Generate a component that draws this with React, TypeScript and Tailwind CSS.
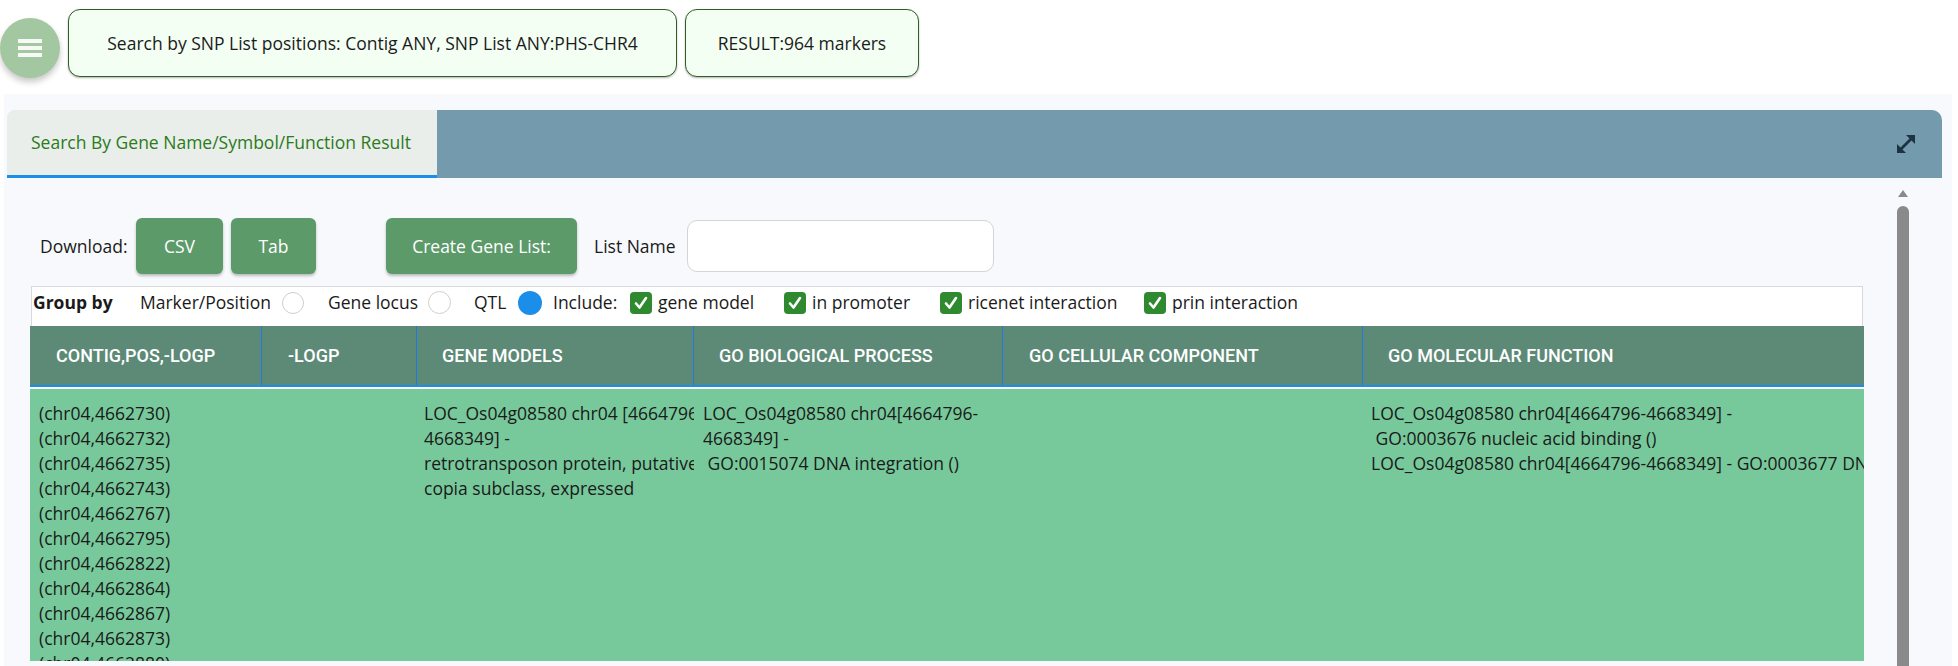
import React from "react";

const F = { fontFamily: '"Open Sans", "Noto Sans", sans-serif' };

function Check() {
  return (
    <span className="inline-flex shrink-0 w-[22px] h-[22px] rounded-[4px] bg-[#2f8a2f] items-center justify-center mr-[6px]">
      <svg width="16" height="16" viewBox="0 0 16 16">
        <path d="M3 8.5 L6.5 12.5 L13 3" stroke="white" strokeWidth="2.6" fill="none" strokeLinecap="round" strokeLinejoin="round" />
      </svg>
    </span>
  );
}

const cols = [
  { w: 232, t: "CONTIG,POS,-LOGP", pl: 26 },
  { w: 155, t: "-LOGP", pl: 26 },
  { w: 277, t: "GENE MODELS", pl: 25 },
  { w: 309, t: "GO BIOLOGICAL PROCESS", pl: 25 },
  { w: 360, t: "GO CELLULAR COMPONENT", pl: 26 },
  { w: 501, t: "GO MOLECULAR FUNCTION", pl: 25 },
];

const positions = [
  "4662730", "4662732", "4662735", "4662743", "4662767", "4662795",
  "4662822", "4662864", "4662867", "4662873", "4662880",
];

export default function App() {
  return (
    <div className="w-[1958px] h-[666px] bg-white overflow-hidden text-[#1a1a1a]" style={F}>
      {/* top bar */}
      <div className="flex items-start pt-[9px] gap-[8px]">
        <div className="w-[60px] h-[60px] mt-[9px] rounded-full bg-[#a3c7a1] shadow-[0_4px_6px_rgba(0,0,0,0.22)] flex items-center justify-center">
          <svg width="24" height="18" viewBox="0 0 24 18">
            <rect x="0" y="0" width="24" height="4" fill="white" fillOpacity="0.9" />
            <rect x="0" y="7" width="24" height="4" fill="white" fillOpacity="0.9" />
            <rect x="0" y="14" width="24" height="4" fill="white" fillOpacity="0.9" />
          </svg>
        </div>
        <div className="w-[609px] h-[68px] rounded-[12px] border border-[#2f5f24] bg-[#f4fff4] shadow-[0_1px_2px_rgba(0,0,0,0.3)] flex items-center justify-center text-[17.5px] text-[#1b1b1b]">
          Search by SNP List positions: Contig ANY, SNP List ANY:PHS-CHR4
        </div>
        <div className="w-[234px] h-[68px] rounded-[12px] border border-[#2f5f24] bg-[#f4fff4] shadow-[0_1px_2px_rgba(0,0,0,0.3)] flex items-center justify-center text-[17.5px] text-[#1b1b1b]">
          RESULT:964 markers
        </div>
      </div>

      {/* panel */}
      <div className="mt-[16px] ml-[4px] w-[1948px] h-[600px] bg-[#f7f9fc] pt-[16px] pl-[3px]">
        <div className="w-[1935px] h-[68px] rounded-t-[10px] bg-[#739bad] flex items-center justify-between">
          <div className="w-[430px] h-[68px] shrink-0 bg-[#e9eeea] rounded-tl-[8px] border-b-[3px] border-[#1a8ee8] flex items-center pl-[24px] text-[17.5px] text-[#2c7a1c]">
            Search By Gene Name/Symbol/Function Result
          </div>
          <svg className="block shrink-0 mr-[25px]" width="22" height="22" viewBox="0 0 22 22">
            <path d="M4.5 17.5 L17.5 4.5" stroke="#1e3342" strokeWidth="2.8" />
            <path d="M11 2 H20 V11 Z" fill="#1e3342" />
            <path d="M2 11 V20 H11 Z" fill="#1e3342" />
          </svg>
        </div>

        <div className="flex">
          <div className="w-[1857px] pl-[23px]">
            {/* toolbar */}
            <div className="flex items-center mt-[40px] h-[56px] text-[17.5px]">
              <span className="ml-[10px] w-[96px] shrink-0 whitespace-nowrap">Download:</span>
              <button className="w-[87px] h-[56px] rounded-[6px] bg-[#5c9a69] text-white shadow-[0_2px_3px_rgba(0,0,0,0.25)]">CSV</button>
              <button className="ml-[8px] w-[85px] h-[56px] rounded-[6px] bg-[#5c9a69] text-white shadow-[0_2px_3px_rgba(0,0,0,0.25)]">Tab</button>
              <button className="ml-[70px] w-[191px] h-[56px] rounded-[6px] bg-[#5c9a69] text-white shadow-[0_2px_3px_rgba(0,0,0,0.25)]">Create Gene List:</button>
              <span className="ml-[17px] w-[93px] shrink-0 whitespace-nowrap">List Name</span>
              <div className="w-[307px] h-[52px] rounded-[10px] border border-[#d4d4d4] bg-white" />
            </div>

            {/* group by */}
            <div className="mt-[12px] ml-[1px] w-[1832px] h-[40px] bg-white border border-[#d9d9d9] border-b-0 flex items-center pl-[1px] pb-[8px] text-[17.5px] whitespace-nowrap">
              <span className="font-bold w-[107px] shrink-0">Group by</span>
              <span className="w-[142px] shrink-0">Marker/Position</span>
              <span className="w-[22px] h-[22px] shrink-0 rounded-full bg-white border border-[#cfcfcf] mr-[24px]" />
              <span className="w-[100px] shrink-0">Gene locus</span>
              <span className="w-[23px] h-[23px] shrink-0 rounded-full bg-white border border-[#cfcfcf] mr-[23px]" />
              <span className="w-[44px] shrink-0">QTL</span>
              <span className="w-[24px] h-[24px] shrink-0 rounded-full bg-[#1a8ee8] mr-[11px]" />
              <span className="w-[77px] shrink-0">Include:</span>
              <Check />
              <span className="w-[126px] shrink-0">gene model</span>
              <Check />
              <span className="w-[128px] shrink-0">in promoter</span>
              <Check />
              <span className="w-[176px] shrink-0">ricenet interaction</span>
              <Check />
              <span>prin interaction</span>
            </div>

            {/* table */}
            <div className="w-[1834px] overflow-hidden">
              <div className="flex h-[61px] bg-[#5d8a77] border-b-[2px] border-[#1a8ee8]">
                {cols.map((c, i) => (
                  <div
                    key={c.t}
                    className={`flex items-center shrink-0 text-white font-medium text-[18px] whitespace-nowrap ${i < 5 ? "border-r border-[#1f7ae0]" : ""}`}
                    style={{ width: c.w, paddingLeft: c.pl, fontFamily: 'Roboto, "Liberation Sans", sans-serif' }}
                  >
                    {c.t}
                  </div>
                ))}
              </div>
              <div className="h-[2px] bg-white" />
              <div className="flex h-[272px] bg-[#77c99b] overflow-hidden text-[17.5px] leading-[25px]">
                <div className="w-[232px] shrink-0 pl-[9px] pt-[12px]">
                  {positions.map((p) => (
                    <div key={p}>(chr04,{p})</div>
                  ))}
                </div>
                <div className="w-[155px] shrink-0" />
                <div className="w-[277px] shrink-0 pl-[7px] pt-[12px] overflow-hidden whitespace-nowrap">
                  <div>LOC_Os04g08580 chr04 [4664796-</div>
                  <div>4668349] -</div>
                  <div>retrotransposon protein, putative, Ty1-</div>
                  <div>copia subclass, expressed</div>
                </div>
                <div className="w-[309px] shrink-0 pl-[9px] pt-[12px] overflow-hidden whitespace-nowrap">
                  <div>LOC_Os04g08580 chr04[4664796-</div>
                  <div>4668349] -</div>
                  <div>&nbsp;GO:0015074 DNA integration ()</div>
                </div>
                <div className="w-[360px] shrink-0" />
                <div className="w-[501px] shrink-0 pl-[8px] pt-[12px] overflow-hidden whitespace-nowrap">
                  <div>LOC_Os04g08580 chr04[4664796-4668349] -</div>
                  <div>&nbsp;GO:0003676 nucleic acid binding ()</div>
                  <div>LOC_Os04g08580 chr04[4664796-4668349] - GO:0003677 DNA binding ()</div>
                </div>
              </div>
            </div>
          </div>

          {/* scrollbar */}
          <div className="w-[14px] ml-[32px] pt-[10px] flex flex-col items-center">
            <svg width="14" height="10" viewBox="0 0 14 10">
              <path d="M2 9 L7 2 L12 9 Z" fill="#8a8a8a" />
            </svg>
            <div className="mt-[8px] w-[12px] h-[480px] rounded-t-full bg-[#8a8a8a]" />
          </div>
        </div>
      </div>
    </div>
  );
}
